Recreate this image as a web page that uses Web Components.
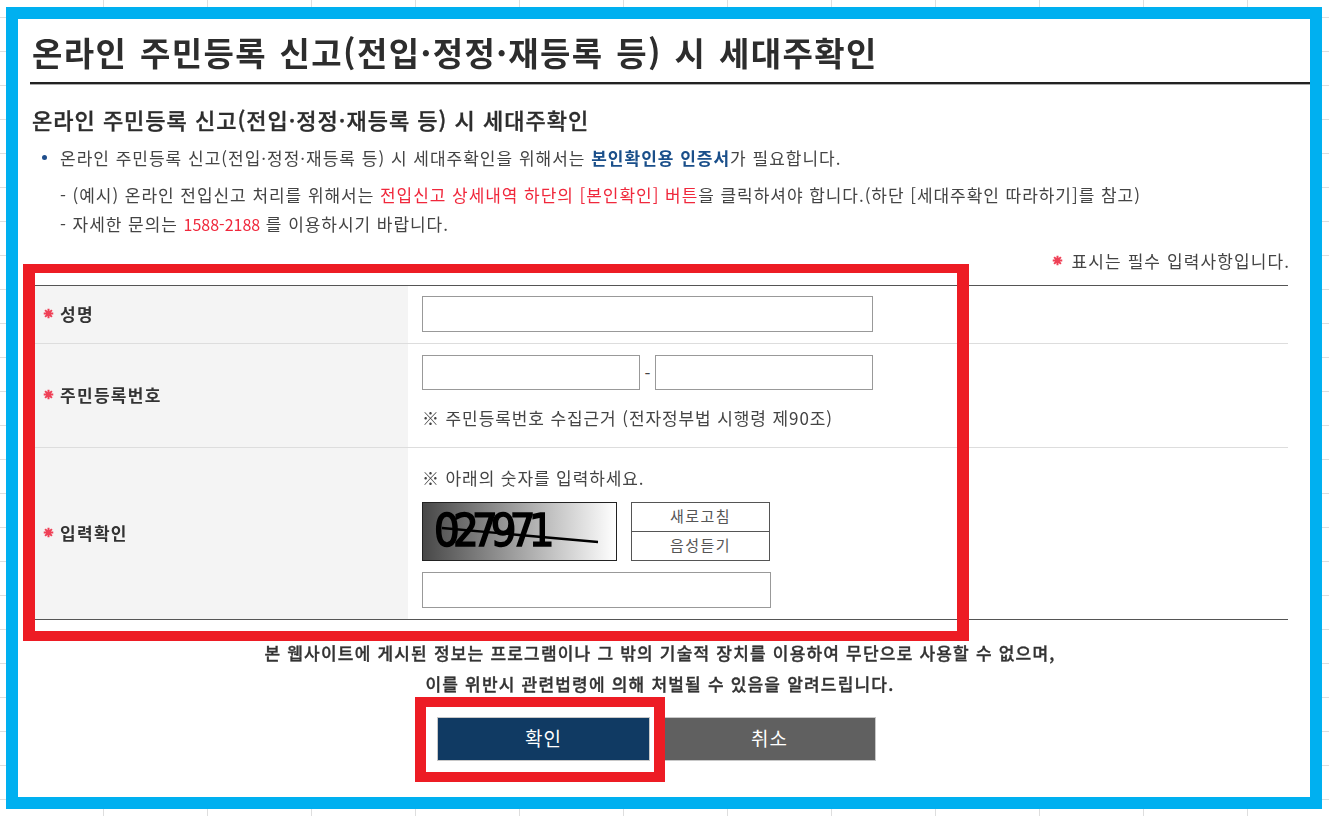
<!DOCTYPE html>
<html lang="ko">
<head>
<meta charset="utf-8">
<title>세대주확인</title>
<style>
  html, body { margin: 0; height: 100%; }
  body {
    background-color: #fff;
    background-image:
      linear-gradient(to right, #dedede 1px, transparent 1px),
      linear-gradient(to bottom, #dedede 1px, transparent 1px);
    background-size: 104px 34px;
    background-position: 103px 17px;
    overflow: hidden;
    font-family: "Noto Sans CJK KR", "Noto Sans", sans-serif;
  }
</style>
</head>
<body>
<confirm-page>
  <page-title slot="title">온라인 주민등록 신고(전입·정정·재등록 등) 시 세대주확인</page-title>
  <notice-block slot="notice"></notice-block>
  <resident-form slot="form"></resident-form>
  <form-actions slot="actions"></form-actions>
</confirm-page>

<script>
const starSvg = `<svg viewBox="0 0 12 12" width="11" height="11" aria-hidden="true" style="flex:none"><path d="M6 .8v10.4M.8 6h10.4M2.3 2.3l7.4 7.4M9.7 2.3l-7.4 7.4" stroke="#ef4056" stroke-width="2.2" fill="none"/></svg>`;

class ConfirmPage extends HTMLElement {
  constructor() {
    super();
    this.attachShadow({ mode: 'open' }).innerHTML = `
      <style>
        :host { display: block; position: relative; width: 1316px; height: 802px; margin: 7px 0 0 6px; box-sizing: border-box; border: 12px solid #00b0f0; background: #fff; color: #333; }
        .mark { position: absolute; box-sizing: border-box; border: solid #ed1c24; pointer-events: none; }
        .mark.form { left: 5px; top: 245px; width: 946px; height: 377px; border-width: 9px 12px 10px 12px; }
        .mark.btn { left: 397px; top: 678px; width: 250px; height: 85px; border-width: 10px 11px; }
      </style>
      <slot name="title"></slot>
      <slot name="notice"></slot>
      <slot name="form"></slot>
      <slot name="actions"></slot>
      <div class="mark form"></div>
      <div class="mark btn"></div>
    `;
  }
}

class PageTitle extends HTMLElement {
  constructor() {
    super();
    this.attachShadow({ mode: 'open' }).innerHTML = `
      <style>
        :host { display: block; margin-left: 12px; height: 65px; box-sizing: border-box; border-bottom: 2px solid #222; box-shadow: 0 1px 0 #aaa; padding-left: 2px; }
        h1 { margin: 0; font-size: 33px; line-height: 66px; font-weight: 700; color: #2d2d2d; letter-spacing: 1.4px; word-spacing: 2px; white-space: nowrap; filter: blur(.35px); }
      </style>
      <h1><slot></slot></h1>
    `;
  }
}

class NoticeBlock extends HTMLElement {
  constructor() {
    super();
    this.attachShadow({ mode: 'open' }).innerHTML = `
      <style>
        :host { display: block; padding: 19px 20px 0 14px; font-size: 17px; letter-spacing: 1px; color: #444; filter: blur(.35px); }
        h2 { margin: 0 0 9px; font-size: 22px; line-height: 32px; font-weight: 500; letter-spacing: 1px; color: #2d2d2d; white-space: nowrap; -webkit-text-stroke: .35px #2d2d2d; }
        .bullet { display: flex; align-items: center; height: 26px; margin-left: 10px; white-space: nowrap; }
        .bullet i { width: 5px; height: 5px; border-radius: 50%; background: #1f4e8c; margin: 0 13px 0 0; }
        .sub { margin-left: 28px; height: 27px; line-height: 27px; white-space: nowrap; letter-spacing: .95px; }
        .sub.first { margin-top: 10px; height: 30px; line-height: 30px; }
        b { color: #1a4f8a; font-weight: 700; }
        em { font-style: normal; color: #f0283c; }
        em.num { font-size: 16px; letter-spacing: 0; }
        .req { display: flex; justify-content: flex-end; align-items: center; gap: 9px; height: 26px; margin-top: 10px; letter-spacing: 1.1px; }
      </style>
      <h2>온라인 주민등록 신고(전입·정정·재등록 등) 시 세대주확인</h2>
      <div class="bullet"><i></i><span>온라인 주민등록 신고(전입·정정·재등록 등) 시 세대주확인을 위해서는 <b>본인확인용 인증서</b>가 필요합니다.</span></div>
      <div class="sub first">- (예시) 온라인 전입신고 처리를 위해서는 <em>전입신고 상세내역 하단의 [본인확인] 버튼</em>을 클릭하셔야 합니다.(하단 [세대주확인 따라하기]를 참고)</div>
      <div class="sub">- 자세한 문의는 <em class="num">1588-2188</em> 를 이용하시기 바랍니다.</div>
      <div class="req">${starSvg}<span>표시는 필수 입력사항입니다.</span></div>
    `;
  }
}

class ResidentForm extends HTMLElement {
  constructor() {
    super();
    this.attachShadow({ mode: 'open' }).innerHTML = `
      <style>
        :host { display: block; margin: 12px 22px 0 12px; border-top: 1px solid #555; border-bottom: 1px solid #555; font-size: 17px; letter-spacing: .9px; color: #444; }
        .row { display: grid; grid-template-columns: 378px 1fr; border-bottom: 1px solid #ddd; }
        .row:last-child { border-bottom: 0; }
        .th { background: #f4f4f4; display: flex; align-items: center; gap: 6px; padding: 0 0 2px 13px; font-size: 17px; letter-spacing: 1.3px; font-weight: 700; color: #333; }
        .th span { filter: blur(.3px); }
        .td { padding: 10px 14px; display: flex; flex-direction: column; align-items: flex-start; }
        input { box-sizing: border-box; display: block; border: 1px solid #999; background: #fff; margin: 0; padding: 0; }
        .pair { display: flex; align-items: center; gap: 4.5px; letter-spacing: 0; }
        .note { white-space: nowrap; filter: blur(.3px); }
        .r1 .td { height: 57px; box-sizing: border-box; }
        .r2 .td { height: 103px; box-sizing: border-box; padding-top: 11px; }
        .r2 .note { margin-top: 15px; line-height: 26px; }
        .r3 .td { height: 171px; box-sizing: border-box; padding-top: 17px; }
        .r3 .note { line-height: 26px; }
        .cap { display: flex; gap: 14px; margin-top: 11px; }
        .image { position: relative; width: 195px; height: 59px; box-sizing: border-box; border: 1px solid #222; background: linear-gradient(to right, #484848, #fff); overflow: hidden; }
        .image span { position: absolute; left: 11px; top: 0; font: 400 45px/56px "DejaVu Sans", sans-serif; font-stretch: condensed; letter-spacing: -6.8px; color: #000; -webkit-text-stroke: 1.5px #000; filter: blur(.4px); }
        .image svg { position: absolute; left: 0; top: 0; }
        .btns { display: flex; flex-direction: column; width: 139px; gap: 0; }
        .btns button { box-sizing: border-box; height: 30px; border: 1px solid #555; background: #fff; padding: 0 0 3px; font: 15px/1 "Noto Sans CJK KR", sans-serif; letter-spacing: 1.4px; color: #555; }
        .btns button + button { margin-top: -1px; }
      </style>
      <div class="row r1">
        <div class="th">${starSvg}<span>성명</span></div>
        <div class="td"><input style="width:451px;height:36px"></div>
      </div>
      <div class="row r2">
        <div class="th">${starSvg}<span>주민등록번호</span></div>
        <div class="td">
          <div class="pair"><input style="width:218px;height:35px"><span>-</span><input style="width:218px;height:35px"></div>
          <div class="note">※ 주민등록번호 수집근거 (전자정부법 시행령 제90조)</div>
        </div>
      </div>
      <div class="row r3">
        <div class="th">${starSvg}<span>입력확인</span></div>
        <div class="td">
          <div class="note">※ 아래의 숫자를 입력하세요.</div>
          <div class="cap">
            <div class="image"><span>027971</span><svg width="193" height="57"><path d="M19 25 L175 39" stroke="#000" stroke-width="2.4"/></svg></div>
            <div class="btns"><button>새로고침</button><button>음성듣기</button></div>
          </div>
          <input style="width:349px;height:36px;margin-top:11px">
        </div>
      </div>
    `;
  }
}

class FormActions extends HTMLElement {
  constructor() {
    super();
    this.attachShadow({ mode: 'open' }).innerHTML = `
      <style>
        :host { display: block; padding-top: 17px; text-align: center; font-size: 17px; letter-spacing: 1.2px; font-weight: 500; color: #333; }
        p { margin: 0 8px 0 0; line-height: 31px; white-space: nowrap; filter: blur(.35px); -webkit-text-stroke: .35px #333; }
        .row { display: flex; justify-content: center; gap: 13px; margin-top: 18px; padding-right: 15px; }
        button { width: 213px; height: 44px; border: 1px solid #c8c8c8; color: #fff; font: 400 19px "Noto Sans CJK KR", sans-serif; letter-spacing: 1px; padding: 0 0 3px; }
        .ok { background: #103a63; }
        .no { background: #606060; }
      </style>
      <p>본 웹사이트에 게시된 정보는 프로그램이나 그 밖의 기술적 장치를 이용하여 무단으로 사용할 수 없으며,</p>
      <p>이를 위반시 관련법령에 의해 처벌될 수 있음을 알려드립니다.</p>
      <div class="row"><button class="ok">확인</button><button class="no">취소</button></div>
    `;
  }
}

customElements.define('confirm-page', ConfirmPage);
customElements.define('page-title', PageTitle);
customElements.define('notice-block', NoticeBlock);
customElements.define('resident-form', ResidentForm);
customElements.define('form-actions', FormActions);
</script>
</body>
</html>
